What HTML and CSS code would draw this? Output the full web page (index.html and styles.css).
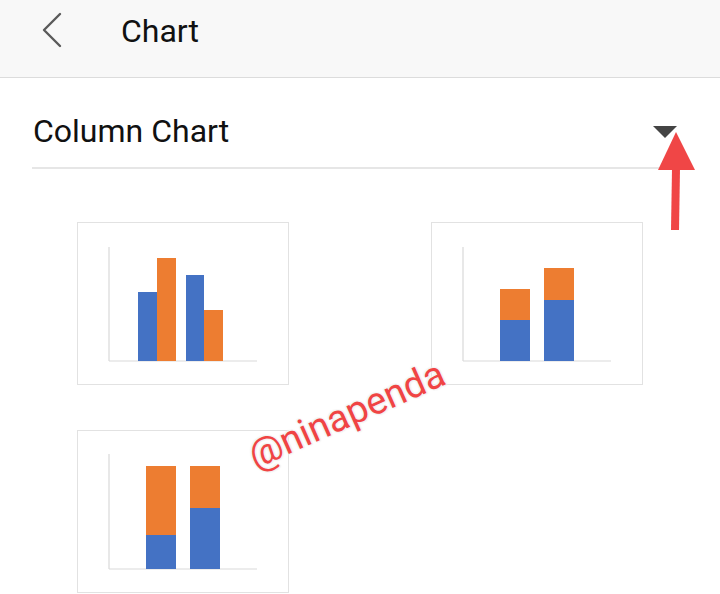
FILE: index.html
```html
<!DOCTYPE html>
<html>
<head>
<meta charset="utf-8">
<link rel="stylesheet" href="styles.css">
</head>
<body>
<div class="page">
  <header class="topbar">
    <svg class="back" width="24" height="40" viewBox="0 0 24 40">
      <polyline points="20,4 4,20 20,36" fill="none" stroke="#5a5a5a" stroke-width="2.4" stroke-linecap="round" stroke-linejoin="round"/>
    </svg>
    <h1 class="title">Chart</h1>
  </header>
  <main class="content">
    <div class="select-row">
      <span class="select-label">Column Chart</span>
      <svg class="caret" width="24" height="13" viewBox="0 0 24 13"><polygon points="0,0 24,0 12,12" fill="#444"/></svg>
    </div>
    <div class="grid">
      <div class="card">
        <svg width="210" height="161" viewBox="1 1 210 161">
          <line x1="32" y1="25" x2="32" y2="139" stroke="#d9d9d9" stroke-width="1.2"/>
          <line x1="32" y1="139" x2="180" y2="139" stroke="#d9d9d9" stroke-width="1.2"/>
          <rect x="61" y="70" width="19" height="69" fill="#4472c4"/>
          <rect x="80" y="36" width="19" height="103" fill="#ed7d31"/>
          <rect x="109" y="53" width="18" height="86" fill="#4472c4"/>
          <rect x="127" y="88" width="19" height="51" fill="#ed7d31"/>
        </svg>
      </div>
      <div class="card">
        <svg width="210" height="161" viewBox="1 1 210 161">
          <line x1="32" y1="25" x2="32" y2="139" stroke="#d9d9d9" stroke-width="1.2"/>
          <line x1="32" y1="139" x2="180" y2="139" stroke="#d9d9d9" stroke-width="1.2"/>
          <rect x="69" y="67" width="30" height="31" fill="#ed7d31"/>
          <rect x="69" y="98" width="30" height="41" fill="#4472c4"/>
          <rect x="113" y="46" width="30" height="32" fill="#ed7d31"/>
          <rect x="113" y="78" width="30" height="61" fill="#4472c4"/>
        </svg>
      </div>
      <div class="card">
        <svg width="210" height="161" viewBox="1 1 210 161">
          <line x1="32" y1="24" x2="32" y2="139" stroke="#d9d9d9" stroke-width="1.2"/>
          <line x1="32" y1="139" x2="180" y2="139" stroke="#d9d9d9" stroke-width="1.2"/>
          <rect x="69" y="36" width="30" height="69" fill="#ed7d31"/>
          <rect x="69" y="105" width="30" height="34" fill="#4472c4"/>
          <rect x="113" y="36" width="30" height="42" fill="#ed7d31"/>
          <rect x="113" y="78" width="30" height="61" fill="#4472c4"/>
        </svg>
      </div>
    </div>
  </main>
  <svg class="red-arrow" width="40" height="100" viewBox="0 0 40 100">
    <polygon points="18,0 0,38 37,38" fill="#f04646"/>
    <polygon points="14,37 22,37 21,98 13,98" fill="#f04646"/>
  </svg>
  <span class="watermark">@ninapenda</span>
</div>
</body>
</html>
```
FILE: styles.css
```css
* { box-sizing: border-box; }
html, body { margin: 0; padding: 0; background: #fff; }
body { font-family: Roboto, "Noto Sans", sans-serif; color: #111; }
.page { position: relative; width: 720px; height: 594px; overflow: hidden; }
.topbar {
  height: 78px;
  background: #f8f8f8;
  border-bottom: 1px solid #dcdcdc;
  display: flex;
  align-items: flex-start;
  padding: 11px 0 0 40px;
}
.back { display: block; margin-top: -1px; }
.title {
  margin: 0 0 0 57px;
  font-size: 32px;
  font-weight: 400;
  line-height: 40px;
  color: #111;
}
.content { padding: 33px 32px 0 32px; }
.select-row {
  display: flex;
  align-items: center;
  justify-content: space-between;
  padding: 0 11px 16px 1px;
  border-bottom: 2px solid #e6e6e6;
}
.select-label { font-size: 32px; line-height: 40px; color: #111; }
.caret { display: block; margin-top: 2px; }
.grid {
  display: grid;
  grid-template-columns: 212px 212px;
  grid-auto-rows: 163px;
  column-gap: 142px;
  row-gap: 45px;
  margin: 53px 0 0 45px;
}
.card { border: 1px solid #e2e2e2; background: #fff; }
.card svg { display: block; }
.red-arrow { position: absolute; left: 658px; top: 132px; }
.watermark {
  position: absolute;
  left: 255px;
  top: 438px;
  font-size: 38px;
  line-height: 36px;
  color: #f04444;
  white-space: nowrap;
  transform: rotate(-24deg);
  transform-origin: 0 30px;
  text-shadow: 0 0 2px #f2f2f2, 0 0 2px #f2f2f2, 0 0 3px #f2f2f2, 1px 1px 2px #eee, -1px -1px 2px #eee;
}
```
